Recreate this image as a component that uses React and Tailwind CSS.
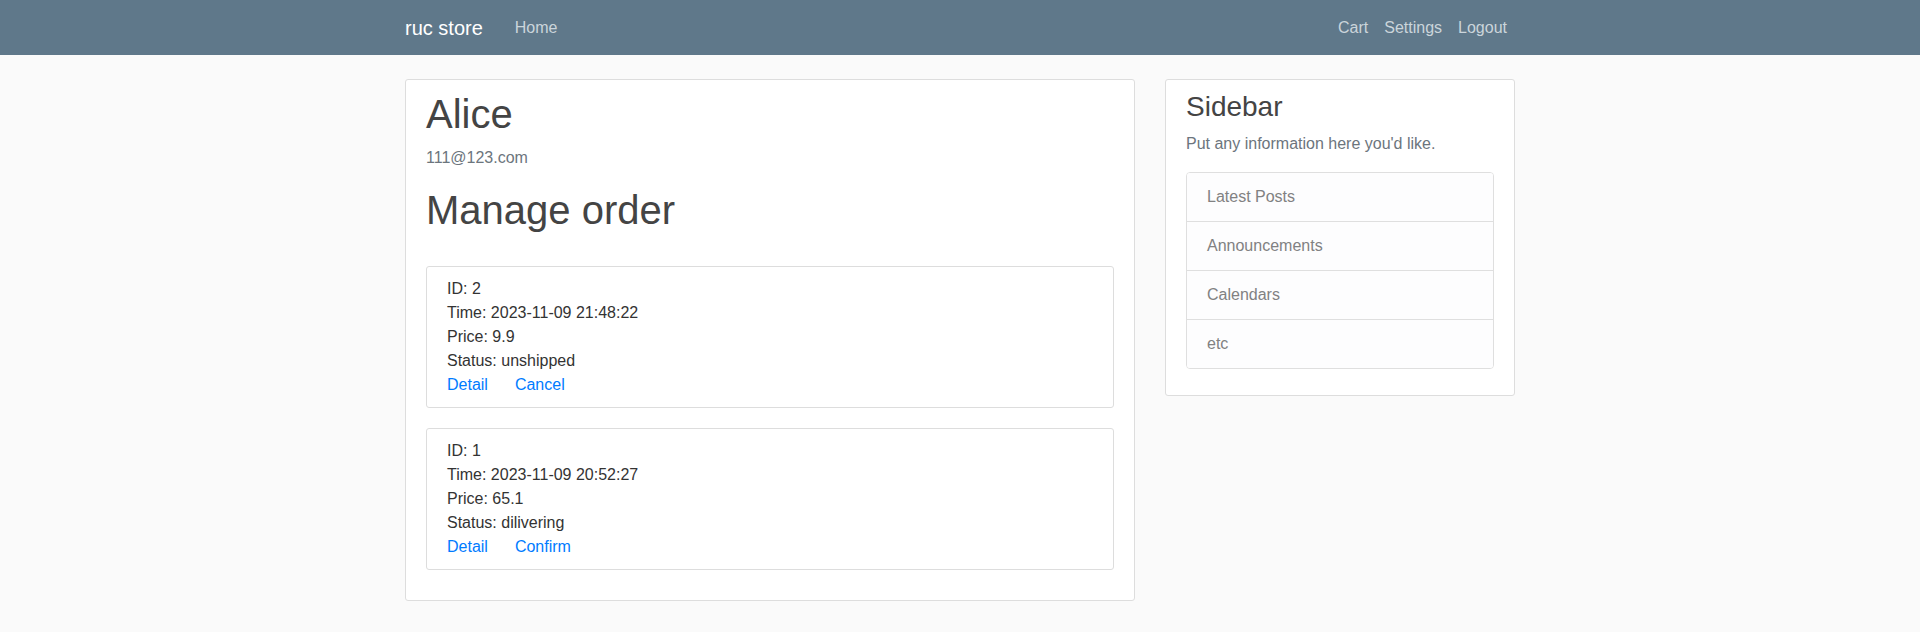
import React from 'react';

const orders = [
  { id: 2, time: '2023-11-09 21:48:22', price: '9.9', status: 'unshipped', action: 'Cancel' },
  { id: 1, time: '2023-11-09 20:52:27', price: '65.1', status: 'dilivering', action: 'Confirm' }
];

const sidebarLinks = ['Latest Posts', 'Announcements', 'Calendars', 'etc'];

const App = () => {
  return (
    <div className="min-h-screen bg-[#fafafa] text-[#333333] text-base leading-6 font-['Liberation_Sans',Arial,sans-serif]">
      <nav className="bg-[#5f788a] h-[55px]">
        <div className="max-w-[1140px] mx-auto px-[15px] h-full flex items-center">
          <a href="#" className="text-white text-[20px] leading-[30px] mr-6">ruc store</a>
          <div className="flex flex-1">
            <a href="#" className="text-[#cbd5db] px-2 py-2">Home</a>
          </div>
          <div className="flex">
            <a href="#" className="text-[#cbd5db] px-2 py-2">Cart</a>
            <a href="#" className="text-[#cbd5db] px-2 py-2">Settings</a>
            <a href="#" className="text-[#cbd5db] px-2 py-2">Logout</a>
          </div>
        </div>
      </nav>

      <main className="max-w-[1140px] mx-auto px-[15px] pt-6">
        <div className="flex gap-[30px] items-start">
          <div className="w-[730px]">
            <div className="bg-white border border-[#dddddd] rounded-[3px] px-5 py-[10px] mb-5">
              <h2 className="text-[40px] leading-[1.2] text-[#444444] mb-2">Alice</h2>
              <p className="text-[#6c757d] mb-4">111@123.com</p>
              <h1 className="text-[40px] leading-[1.2] text-[#444444] mb-8">Manage order</h1>
              {orders.map((order) => (
                <div key={order.id} className="bg-white border border-[#dddddd] rounded-[3px] px-5 py-[10px] mb-5">
                  <div>ID: {order.id}</div>
                  <div>Time: {order.time}</div>
                  <div>Price: {order.price}</div>
                  <div>Status: {order.status}</div>
                  <div className="flex gap-[27px]">
                    <a href="#" className="text-[#007bff]">Detail</a>
                    <a href="#" className="text-[#007bff]">{order.action}</a>
                  </div>
                </div>
              ))}
            </div>
          </div>

          <div className="w-[350px]">
            <div className="bg-white border border-[#dddddd] rounded-[3px] px-5 pt-[10px] pb-[26px] mb-5">
              <h3 className="text-[28px] leading-[1.2] text-[#444444] mb-2">Sidebar</h3>
              <p className="text-[#6c757d] mb-4">Put any information here you'd like.</p>
              <ul className="border border-[#dfdfdf] rounded-[4px] overflow-hidden">
                {sidebarLinks.map((item, i) => (
                  <li
                    key={item}
                    className={
                      i === 0
                        ? 'bg-[#fdfdfe] text-[#818182] px-5 py-3'
                        : 'bg-[#fdfdfe] text-[#818182] px-5 py-3 border-t border-[#dfdfdf]'
                    }
                  >
                    {item}
                  </li>
                ))}
              </ul>
            </div>
          </div>
        </div>
      </main>
    </div>
  );
};

export default App;
